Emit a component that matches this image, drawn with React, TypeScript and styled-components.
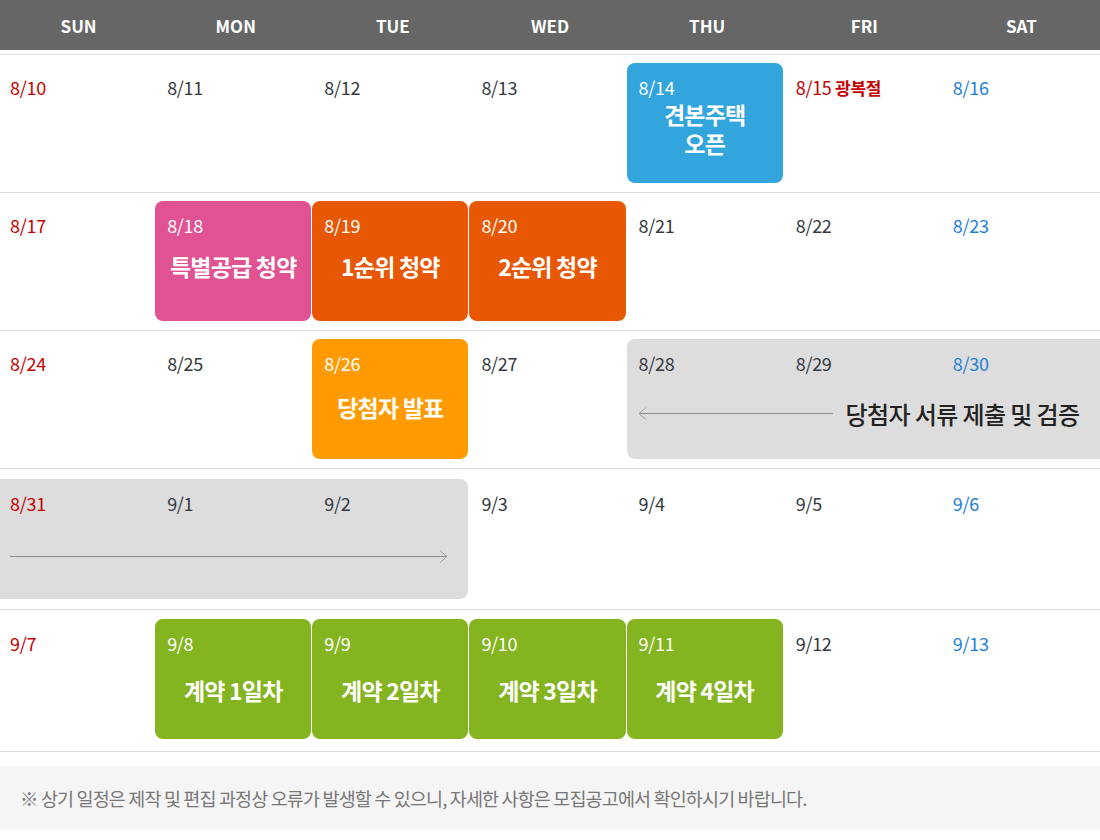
import styled, { createGlobalStyle } from "styled-components";

const GlobalStyle = createGlobalStyle`
  body {
    margin: 0;
    background: #fff;
    font-family: "Noto Sans CJK KR", "Noto Sans", sans-serif;
  }
`;

type Tone = "sun" | "sat" | "normal";

type Day = {
  date: string;
  tone?: Tone;
  note?: string;
  event?: { color: string; label: string[] };
};

type Span = {
  from: number;
  to: number;
  dir: "left" | "right";
  text?: string;
};

type Week = {
  pt: number;
  pb: number;
  labelGap: number;
  days: Day[];
  span?: Span;
};

const weeks: Week[] = [
  {
    pt: 8,
    pb: 9,
    labelGap: 25,
    days: [
      { date: "8/10", tone: "sun" },
      { date: "8/11" },
      { date: "8/12" },
      { date: "8/13" },
      { date: "8/14", event: { color: "#33a5dd", label: ["견본주택", "오픈"] } },
      { date: "8/15", tone: "sun", note: "광복절" },
      { date: "8/16", tone: "sat" },
    ],
  },
  {
    pt: 8,
    pb: 9,
    labelGap: 26,
    days: [
      { date: "8/17", tone: "sun" },
      { date: "8/18", event: { color: "#e05292", label: ["특별공급 청약"] } },
      { date: "8/19", event: { color: "#e85804", label: ["1순위 청약"] } },
      { date: "8/20", event: { color: "#e85804", label: ["2순위 청약"] } },
      { date: "8/21" },
      { date: "8/22" },
      { date: "8/23", tone: "sat" },
    ],
  },
  {
    pt: 8,
    pb: 9,
    labelGap: 20,
    days: [
      { date: "8/24", tone: "sun" },
      { date: "8/25" },
      { date: "8/26", event: { color: "#ff9b00", label: ["당첨자 발표"] } },
      { date: "8/27" },
      { date: "8/28" },
      { date: "8/29" },
      { date: "8/30", tone: "sat" },
    ],
    span: { from: 5, to: 8, dir: "left", text: "당첨자 서류 제출 및 검증" },
  },
  {
    pt: 10,
    pb: 10,
    labelGap: 22,
    days: [
      { date: "8/31", tone: "sun" },
      { date: "9/1" },
      { date: "9/2" },
      { date: "9/3" },
      { date: "9/4" },
      { date: "9/5" },
      { date: "9/6", tone: "sat" },
    ],
    span: { from: 1, to: 4, dir: "right" },
  },
  {
    pt: 9,
    pb: 12,
    labelGap: 14,
    days: [
      { date: "9/7", tone: "sun" },
      { date: "9/8", event: { color: "#84b41f", label: ["계약 1일차"] } },
      { date: "9/9", event: { color: "#84b41f", label: ["계약 2일차"] } },
      { date: "9/10", event: { color: "#84b41f", label: ["계약 3일차"] } },
      { date: "9/11", event: { color: "#84b41f", label: ["계약 4일차"] } },
      { date: "9/12" },
      { date: "9/13", tone: "sat" },
    ],
  },
];

const toneColor: Record<Tone, string> = {
  sun: "#c40000",
  sat: "#1f80d8",
  normal: "#343a40",
};

const Page = styled.div`
  width: 1100px;
  overflow: hidden;
`;

const Head = styled.div`
  display: grid;
  grid-template-columns: repeat(7, 1fr);
  height: 50px;
  background: #666666;
  margin-bottom: 4px;
`;

const HeadCell = styled.div`
  display: flex;
  align-items: center;
  justify-content: center;
  color: #fff;
  font-size: 17px;
  font-weight: 700;
`;

const Body = styled.div`
  border-bottom: 1px solid #dddddd;
`;

const Row = styled.div<{ $pt: number; $pb: number }>`
  display: grid;
  grid-template-columns: repeat(7, 1fr);
  grid-template-rows: 120px;
  border-top: 1px solid #dddddd;
  padding: ${(p) => p.$pt}px 0 ${(p) => p.$pb}px;
`;

const DayCell = styled.div<{ $col: number; $tone: Tone }>`
  grid-row: 1;
  grid-column: ${(p) => p.$col};
  padding: 12px 10px 0;
  font-size: 18px;
  line-height: 24px;
  color: ${(p) => toneColor[p.$tone]};
  letter-spacing: -0.3px;
`;

const Note = styled.span`
  font-weight: 700;
  font-size: 17px;
`;

const Block = styled.div<{ $col: number; $color: string; $gap: number }>`
  grid-row: 1;
  grid-column: ${(p) => p.$col};
  margin: 0 3px 0 -2px;
  border-radius: 8px;
  background: ${(p) => p.$color};
  color: #fff;
  padding: 12px 12px ${(p) => p.$gap}px;
  display: flex;
  flex-direction: column;
`;

const BlockDate = styled.div`
  font-size: 18px;
  line-height: 24px;
  letter-spacing: -0.3px;
`;

const BlockLabel = styled.div`
  flex: 1;
  display: flex;
  flex-direction: column;
  align-items: center;
  justify-content: center;
  font-size: 23px;
  line-height: 29px;
  font-weight: 700;
  letter-spacing: -0.8px;
  white-space: nowrap;
`;

const SpanBar = styled.div<{ $from: number; $to: number; $dir: "left" | "right" }>`
  grid-row: 1;
  grid-column: ${(p) => p.$from} / ${(p) => p.$to};
  background: #dddddd;
  border-radius: 8px;
  margin: ${(p) => (p.$dir === "left" ? "0 -20px 0 -2px" : "0 3px 0 -20px")};
  padding: ${(p) => (p.$dir === "left" ? "60px 0 0 11px" : "63px 0 0 30px")};
  display: flex;
  align-items: flex-start;
`;

const SpanLine = styled.div`
  display: flex;
  align-items: center;
  gap: 13px;
  height: 28px;
`;

const SpanText = styled.div`
  font-size: 24px;
  font-weight: 500;
  color: #222;
  letter-spacing: -0.6px;
  white-space: nowrap;
`;

const Footer = styled.div`
  margin-top: 14px;
  height: 64px;
  background: #f5f5f5;
  display: flex;
  align-items: center;
  padding-left: 20px;
  font-size: 18.5px;
  color: #777;
  letter-spacing: -0.86px;
`;

function Arrow({ dir, width }: { dir: "left" | "right"; width: number }) {
  return (
    <svg width={width} height={14} viewBox={`0 0 ${width} 14`} style={{ display: "block" }}>
      {dir === "left" ? (
        <g fill="none" strokeWidth={1}>
          <line x1={1} y1={7.5} x2={width} y2={7.5} stroke="#8a8a8a" />
          <polyline points="8,1.5 1,7.5 8,13.5" stroke="#a0a0a0" />
        </g>
      ) : (
        <g fill="none" strokeWidth={1}>
          <line x1={0} y1={7.5} x2={width - 1} y2={7.5} stroke="#8a8a8a" />
          <polyline points={`${width - 8},1.5 ${width - 1},7.5 ${width - 8},13.5`} stroke="#a0a0a0" />
        </g>
      )}
    </svg>
  );
}

export default function App() {
  const heads = ["SUN", "MON", "TUE", "WED", "THU", "FRI", "SAT"];
  return (
    <Page>
      <GlobalStyle />
      <Head>
        {heads.map((h) => (
          <HeadCell key={h}>{h}</HeadCell>
        ))}
      </Head>
      <Body>
        {weeks.map((week, wi) => (
          <Row key={wi} $pt={week.pt} $pb={week.pb}>
            {week.span ? (
              <SpanBar $from={week.span.from} $to={week.span.to} $dir={week.span.dir}>
                {week.span.dir === "left" ? (
                  <SpanLine>
                    <Arrow dir="left" width={195} />
                    <SpanText>{week.span.text}</SpanText>
                  </SpanLine>
                ) : (
                  <SpanLine>
                    <Arrow dir="right" width={438} />
                  </SpanLine>
                )}
              </SpanBar>
            ) : null}
            {week.days.map((day, di) =>
              day.event ? (
                <Block key={day.date} $col={di + 1} $color={day.event.color} $gap={week.labelGap}>
                  <BlockDate>{day.date}</BlockDate>
                  <BlockLabel>
                    {day.event.label.map((l) => (
                      <span key={l}>{l}</span>
                    ))}
                  </BlockLabel>
                </Block>
              ) : (
                <DayCell key={day.date} $col={di + 1} $tone={day.tone || "normal"}>
                  {day.date}
                  {day.note ? <Note> {day.note}</Note> : null}
                </DayCell>
              )
            )}
          </Row>
        ))}
      </Body>
      <Footer>
        ※ 상기 일정은 제작 및 편집 과정상 오류가 발생할 수 있으니, 자세한 사항은 모집공고에서 확인하시기 바랍니다.
      </Footer>
    </Page>
  );
}
